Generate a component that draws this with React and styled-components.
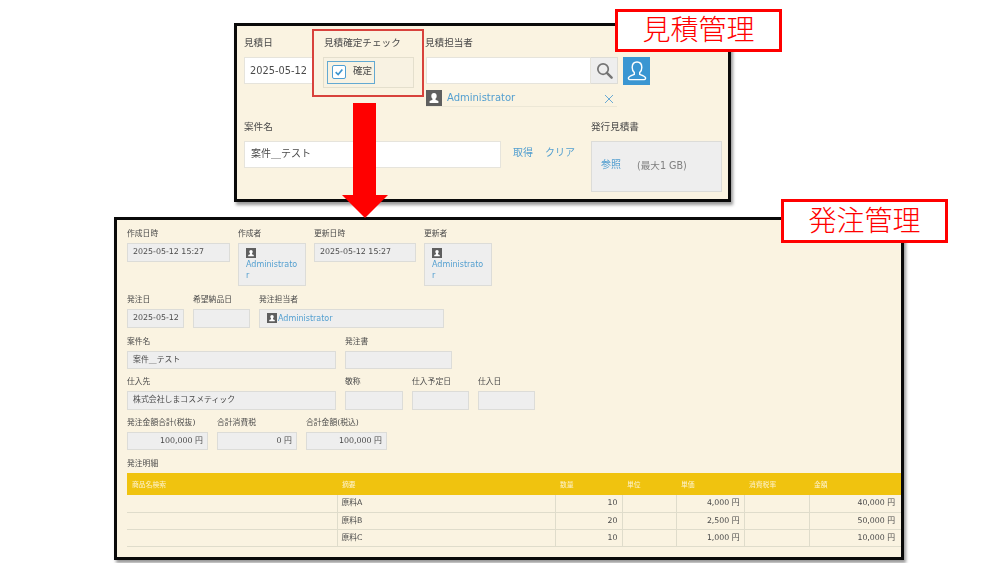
import React from "react";
import styled, { createGlobalStyle } from "styled-components";

const PersonBadge = ({ size = 10 }) => (
  <BadgeIcon viewBox="0 0 16 16" $size={size}>
    <rect width="16" height="16" fill="#5f5f5f" />
    <path d="M8 3c-1.700 0-2.700 1.200-2.700 2.900 0 1.200.5 2.200 1.200 2.900v1L3.600 11v2h8.800v-2L9.500 9.800v-1c.7-.7 1.200-1.700 1.200-2.900C10.700 4.200 9.700 3 8 3z" fill="#fff" />
  </BadgeIcon>
);

const Field = ({ label, children, width }) => (
  <FieldWrap $width={width}>
    <SmallLabel>{label}</SmallLabel>
    {children}
  </FieldWrap>
);

const columns = [
  { name: "商品名検索", width: 210 },
  { name: "摘要", width: 218 },
  { name: "数量", width: 67 },
  { name: "単位", width: 54 },
  { name: "単価", width: 68 },
  { name: "消費税率", width: 65 },
  { name: "金額", width: 92 },
];

const rows = [
  { name: "原料A", qty: "10", price: "4,000 円", total: "40,000 円" },
  { name: "原料B", qty: "20", price: "2,500 円", total: "50,000 円" },
  { name: "原料C", qty: "10", price: "1,000 円", total: "10,000 円" },
];

const App = () => {
  return (
    <>
      <GlobalStyle />
      <Canvas>
        <EstimatePanel>
          <Soft>
            <TopRow>
              <BigField $width={79}>
                <BigLabel>見積日</BigLabel>
                <DateInput>2025-05-12</DateInput>
              </BigField>
              <BigField $width={103}>
                <BigLabel $push>見積確定チェック</BigLabel>
                <CheckGroup>
                  <CheckButton>
                    <CheckBox>
                      <svg viewBox="0 0 12 12" width="10" height="10">
                        <path d="M2 6.200 5 9l5-6" fill="none" stroke="#3d95cf" strokeWidth="2" />
                      </svg>
                    </CheckBox>
                    確定
                  </CheckButton>
                </CheckGroup>
              </BigField>
              <BigField $width={225}>
                <BigLabel $pull>見積担当者</BigLabel>
                <UserPicker>
                  <UserInput />
                  <SearchButton>
                    <svg viewBox="0 0 20 20" width="19" height="19">
                      <circle cx="8.500" cy="8.500" r="5.500" fill="none" stroke="#757575" strokeWidth="1.800" />
                      <path d="M12.500 12.500 17.500 17.500" stroke="#757575" strokeWidth="2.600" strokeLinecap="round" />
                    </svg>
                  </SearchButton>
                  <UserButton>
                    <svg viewBox="0 0 24 24" width="24" height="24">
                      <path
                        d="M12 3c-3 0-4.800 2.300-4.800 5.400 0 2.200.9 4 2.100 5.200v1.700c-2.500 1-5.300 1.800-5.800 3.300-.3.900.2 2 1.200 2h14.600c1 0 1.500-1.100 1.200-2-.5-1.500-3.300-2.300-5.800-3.300v-1.700c1.200-1.200 2.100-3 2.100-5.200C16.800 5.300 15 3 12 3z"
                        fill="none"
                        stroke="#fff"
                        strokeWidth="1.400"
                      />
                    </svg>
                  </UserButton>
                </UserPicker>
                <SelectedUser>
                  <PersonBadge size={16} />
                  <UserName>Administrator</UserName>
                  <RemoveMark viewBox="0 0 10 10" width="10" height="10">
                    <path d="M1 1l8 8M9 1l-8 8" stroke="#6aaad4" strokeWidth="1" fill="none" />
                  </RemoveMark>
                </SelectedUser>
              </BigField>
            </TopRow>
            <BottomRow>
              <BigField $width={347}>
                <BigLabel>案件名</BigLabel>
                <NameLine>
                  <NameInput>案件＿テスト</NameInput>
                  <TextLink $lift>取得</TextLink>
                  <TextLink $lift>クリア</TextLink>
                </NameLine>
              </BigField>
              <BigField $width={131}>
                <BigLabel>発行見積書</BigLabel>
                <UploadBox>
                  <TextLink>参照</TextLink>
                  <UploadHint>(最大1 GB)</UploadHint>
                </UploadBox>
              </BigField>
            </BottomRow>
          </Soft>
          <Highlight />
        </EstimatePanel>

        <DownArrow viewBox="0 0 46 115" width="46" height="115">
          <path d="M11 0h23v92h12L23 115 0 92h11z" fill="#ff0000" />
        </DownArrow>

        <OrderPanel>
          <Soft>
            <FormRow $gap={8}>
              <Field label="作成日時" width={103}>
                <ValueBox>2025-05-12 15:27</ValueBox>
              </Field>
              <Field label="作成者" width={68}>
                <UserBox>
                  <PersonBadge />
                  <UserLink>Administrator</UserLink>
                </UserBox>
              </Field>
              <Field label="更新日時" width={102}>
                <ValueBox>2025-05-12 15:27</ValueBox>
              </Field>
              <Field label="更新者" width={68}>
                <UserBox>
                  <PersonBadge />
                  <UserLink>Administrator</UserLink>
                </UserBox>
              </Field>
            </FormRow>
            <FormRow $top={9}>
              <Field label="発注日" width={57}>
                <ValueBox>2025-05-12</ValueBox>
              </Field>
              <Field label="希望納品日" width={57}>
                <ValueBox />
              </Field>
              <Field label="発注担当者" width={185}>
                <ValueBox $pad={7} $flex>
                  <PersonBadge />
                  <UserLink $inline>Administrator</UserLink>
                </ValueBox>
              </Field>
            </FormRow>
            <FormRow $top={9}>
              <Field label="案件名" width={209}>
                <ValueBox>案件＿テスト</ValueBox>
              </Field>
              <Field label="発注書" width={107}>
                <ValueBox />
              </Field>
            </FormRow>
            <FormRow $top={8}>
              <Field label="仕入先" width={209}>
                <ValueBox>株式会社しまコスメティック</ValueBox>
              </Field>
              <Field label="敬称" width={58}>
                <ValueBox />
              </Field>
              <Field label="仕入予定日" width={57}>
                <ValueBox />
              </Field>
              <Field label="仕入日" width={57}>
                <ValueBox />
              </Field>
            </FormRow>
            <FormRow $top={8}>
              <Field label="発注金額合計(税抜)" width={81}>
                <ValueBox $right>100,000 円</ValueBox>
              </Field>
              <Field label="合計消費税" width={80}>
                <ValueBox $right>0 円</ValueBox>
              </Field>
              <Field label="合計金額(税込)" width={81}>
                <ValueBox $right>100,000 円</ValueBox>
              </Field>
            </FormRow>
            <DetailTitle>発注明細</DetailTitle>
            <DetailTable>
              <colgroup>
                {columns.map((c) => (
                  <col key={c.name} width={c.width} />
                ))}
              </colgroup>
              <thead>
                <tr>
                  {columns.map((c) => (
                    <HeadCell key={c.name}>{c.name}</HeadCell>
                  ))}
                </tr>
              </thead>
              <tbody>
                {rows.map((r) => (
                  <tr key={r.name}>
                    <BodyCell $first />
                    <BodyCell>{r.name}</BodyCell>
                    <BodyCell $right>{r.qty}</BodyCell>
                    <BodyCell />
                    <BodyCell $right>{r.price}</BodyCell>
                    <BodyCell />
                    <BodyCell $right $last>{r.total}</BodyCell>
                  </tr>
                ))}
              </tbody>
            </DetailTable>
          </Soft>
        </OrderPanel>

        <Callout $left={615} $top={9} $width={167} $height={43}>見積管理</Callout>
        <Callout $left={781} $top={199} $width={167} $height={44}>発注管理</Callout>
      </Canvas>
    </>
  );
};

export default App;

const GlobalStyle = createGlobalStyle`
  html, body {
    margin: 0;
    padding: 0;
    background: #fff;
  }
  * {
    box-sizing: border-box;
  }
`;

const Canvas = styled.div`
  position: relative;
  width: 1000px;
  height: 563px;
  overflow: hidden;
  background: #fff;
  font-family: "DejaVu Sans", "Noto Sans CJK JP", sans-serif;
  color: #4a4a4a;
`;

const Soft = styled.div`
  filter: blur(0.4px);
`;

const EstimatePanel = styled.section`
  position: absolute;
  left: 234px;
  top: 23px;
  width: 497px;
  height: 179px;
  padding: 12px 0 0 7px;
  background: #faf3e1;
  border: 3px solid #0a0a0a;
  box-shadow: 2px 3px 3px rgba(0, 0, 0, 0.4);
`;

const TopRow = styled.div`
  display: flex;
`;

const BottomRow = styled.div`
  display: flex;
  margin-top: 15px;
`;

const BigField = styled.div`
  width: ${(props) => props.$width}px;
  display: flex;
  flex-direction: column;
`;

const BigLabel = styled.div`
  height: 10px;
  margin-bottom: 9px;
  margin-left: ${(props) => (props.$pull ? -1 : props.$push ? 1 : 0)}px;
  font-size: 9.600px;
  line-height: 10px;
  white-space: nowrap;
`;

const DateInput = styled.div`
  width: 68px;
  height: 27px;
  padding-left: 5px;
  background: #fff;
  border: 1px solid #e6e4dc;
  border-right: 0;
  font-size: 9.800px;
  line-height: 25px;
  white-space: nowrap;
`;

const CheckGroup = styled.div`
  width: 91px;
  height: 31px;
  padding: 3px;
  background: #f8f2e2;
  border: 1px solid #e4dfcd;
`;

const CheckButton = styled.div`
  width: 48px;
  height: 23px;
  padding: 3px 0 0 4px;
  display: flex;
  gap: 7px;
  border: 1px solid #63a9d2;
  font-size: 9.600px;
  line-height: 11px;
`;

const CheckBox = styled.span`
  width: 14px;
  height: 14px;
  display: flex;
  align-items: center;
  justify-content: center;
  background: #fff;
  border: 1.500px solid #4f9fd3;
  border-radius: 2px;
`;

const Highlight = styled.div`
  position: absolute;
  left: 75px;
  top: 3px;
  width: 112px;
  height: 68px;
  border: 2px solid #d8423c;
`;

const UserPicker = styled.div`
  display: flex;
  height: 28px;
`;

const UserInput = styled.div`
  width: 165px;
  height: 27px;
  background: #fff;
  border: 1px solid #e6e4dc;
`;

const SearchButton = styled.div`
  width: 27px;
  height: 27px;
  display: flex;
  align-items: center;
  justify-content: center;
  background: #eeeeee;
  border: 1px solid #dddcd6;
  border-left: 0;
`;

const UserButton = styled.div`
  width: 27px;
  height: 28px;
  margin-left: 5px;
  display: flex;
  align-items: center;
  justify-content: center;
  background: #3a96d2;
`;

const SelectedUser = styled.div`
  width: 191px;
  height: 17px;
  margin-top: 5px;
  display: flex;
  align-items: flex-start;
  border-bottom: 1px solid #ece7d6;
`;

const BadgeIcon = styled.svg`
  display: block;
  flex: none;
  width: ${(props) => props.$size}px;
  height: ${(props) => props.$size}px;
`;

const UserName = styled.span`
  margin-left: 5px;
  color: #539fd0;
  font-size: 10px;
  line-height: 15px;
`;

const RemoveMark = styled.svg`
  margin-left: auto;
  margin-right: 3px;
  margin-top: 4px;
`;

const NameLine = styled.div`
  display: flex;
  align-items: center;
  gap: 12px;
  height: 27px;
`;

const NameInput = styled.div`
  width: 257px;
  height: 27px;
  padding-left: 6px;
  background: #fff;
  border: 1px solid #e6e4dc;
  font-size: 10px;
  line-height: 24px;
`;

const TextLink = styled.span`
  margin-bottom: ${(props) => (props.$lift ? 4 : 0)}px;
  color: #539fd0;
  font-size: 10px;
  line-height: 14px;
  white-space: nowrap;
`;

const UploadBox = styled.div`
  width: 131px;
  height: 51px;
  padding: 0 0 4px 9px;
  display: flex;
  align-items: center;
  gap: 16px;
  background: #eeeeee;
  border: 1px solid #dcdcd8;
`;

const UploadHint = styled.span`
  color: #808080;
  font-size: 9.600px;
`;

const DownArrow = styled.svg`
  position: absolute;
  left: 342px;
  top: 103px;
  z-index: 2;
`;

const OrderPanel = styled.section`
  position: absolute;
  left: 114px;
  top: 217px;
  width: 790px;
  height: 343px;
  padding: 9px 0 0 10px;
  background: #faf3e1;
  border: 3px solid #0a0a0a;
  box-shadow: 2px 3px 3px rgba(0, 0, 0, 0.4);
`;

const FormRow = styled.div`
  display: flex;
  align-items: flex-start;
  gap: ${(props) => props.$gap || 9}px;
  margin-top: ${(props) => props.$top || 0}px;
`;

const FieldWrap = styled.div`
  flex: none;
  width: ${(props) => props.$width}px;
`;

const SmallLabel = styled.div`
  height: 10px;
  margin-bottom: 4px;
  font-size: 7.800px;
  line-height: 10px;
  white-space: nowrap;
`;

const ValueBox = styled.div`
  display: ${(props) => (props.$flex ? "flex" : "block")};
  align-items: center;
  gap: 1px;
  height: 18.500px;
  padding: 0 ${(props) => (props.$right ? 4 : 5)}px 0 ${(props) => props.$pad || 5}px;
  background: #eeeeee;
  border: 1px solid #dcdcd8;
  font-size: 7.900px;
  line-height: 16px;
  text-align: ${(props) => (props.$right ? "right" : "left")};
  white-space: nowrap;
`;

const UserBox = styled.div`
  height: 43px;
  padding: 4px 7px 0;
  background: #eeeeee;
  border: 1px solid #dcdcd8;
`;

const UserLink = styled.span`
  display: ${(props) => (props.$inline ? "inline" : "block")};
  margin-top: ${(props) => (props.$inline ? 0 : 1)}px;
  color: #539fd0;
  font-size: 8px;
  line-height: 11px;
  word-break: break-all;
`;

const DetailTitle = styled.div`
  margin-top: 9px;
  height: 14px;
  font-size: 7.800px;
  line-height: 10px;
`;

const DetailTable = styled.table`
  width: 774px;
  table-layout: fixed;
  border-collapse: collapse;
`;

const HeadCell = styled.th`
  height: 22px;
  padding: 0 0 0 5px;
  background: #f0c30f;
  color: #fdf3cf;
  font-size: 6.800px;
  font-weight: 400;
  text-align: left;
`;

const BodyCell = styled.td`
  height: 17px;
  padding: 0 ${(props) => (props.$last ? 6 : 4)}px 0 4px;
  border-bottom: 1px solid #dfdccb;
  border-left: ${(props) => (props.$first ? "0" : "1px solid #dfdccb")};
  font-size: 7.800px;
  line-height: 10px;
  text-align: ${(props) => (props.$right ? "right" : "left")};
  white-space: nowrap;
`;

const Callout = styled.div`
  position: absolute;
  left: ${(props) => props.$left}px;
  top: ${(props) => props.$top}px;
  width: ${(props) => props.$width}px;
  height: ${(props) => props.$height}px;
  z-index: 3;
  display: flex;
  align-items: center;
  justify-content: center;
  padding-bottom: 5px;
  background: #fff;
  border: 3px solid #ff0000;
  color: #ff0000;
  font-family: "Noto Sans CJK JP", sans-serif;
  font-size: 28px;
  font-weight: 300;
  line-height: 1;
`;
